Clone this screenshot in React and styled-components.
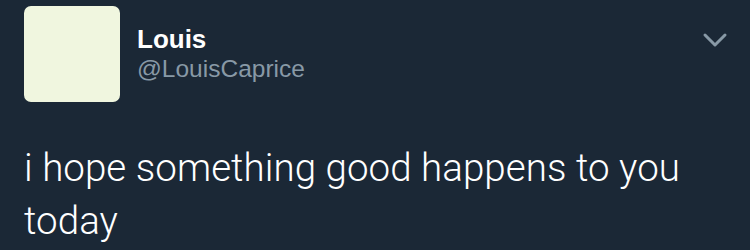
import styled, { createGlobalStyle } from "styled-components";

const GlobalStyle = createGlobalStyle`
  html, body {
    margin: 0;
    padding: 0;
    background: #1b2836;
  }
  body {
    font-family: "Liberation Sans", Arial, sans-serif;
  }
`;

const Tweet = styled.div`
  width: 750px;
  height: 250px;
  box-sizing: border-box;
  padding: 6px 22px 0 24px;
  background: #1b2836;
  overflow: hidden;
`;

const Header = styled.div`
  display: flex;
  align-items: flex-start;
`;

const Avatar = styled.div`
  width: 96px;
  height: 96px;
  border-radius: 7px;
  background: #f0f6df;
  flex-shrink: 0;
`;

const Names = styled.div`
  display: flex;
  flex-direction: column;
  margin-left: 17px;
  padding-top: 18px;
`;

const Name = styled.span`
  font-size: 26px;
  font-weight: 700;
  line-height: 30px;
  color: #ffffff;
`;

const Handle = styled.span`
  font-size: 24.5px;
  line-height: 30px;
  color: #8899a6;
`;

const Caret = styled.button`
  margin-left: auto;
  margin-top: 26px;
  padding: 0;
  border: none;
  background: none;
  display: flex;
  color: #8899a6;
`;

const Text = styled.p`
  margin: 39px 0 0;
  font-family: Roboto, "Liberation Sans", sans-serif;
  font-weight: 300;
  font-size: 38.5px;
  letter-spacing: 0.05px;
  line-height: 53px;
  color: #ffffff;
`;

export default function App() {
  return (
    <>
      <GlobalStyle />
      <Tweet>
        <Header>
          <Avatar />
          <Names>
            <Name>Louis</Name>
            <Handle>@LouisCaprice</Handle>
          </Names>
          <Caret aria-label="More">
            <svg width="26" height="18" viewBox="0 0 26 18">
              <path
                d="M3 3 L13 13 L23 3"
                fill="none"
                stroke="currentColor"
                strokeWidth="3"
                strokeLinecap="round"
                strokeLinejoin="round"
              />
            </svg>
          </Caret>
        </Header>
        <Text>i hope something good happens to you today</Text>
      </Tweet>
    </>
  );
}
